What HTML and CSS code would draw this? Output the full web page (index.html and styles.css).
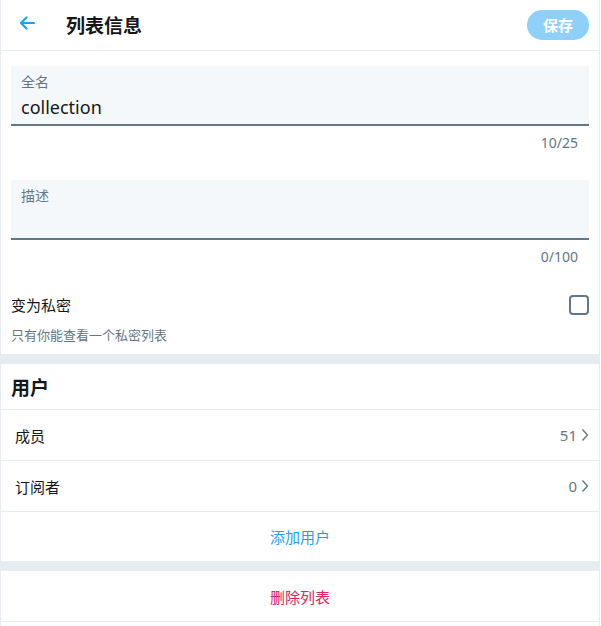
FILE: index.html
```html
<!DOCTYPE html>
<html lang="zh">
<head>
<meta charset="utf-8">
<title>列表信息</title>
<link rel="stylesheet" href="styles.css">
</head>
<body>
<div class="page">
  <header class="topbar">
    <div class="back">
      <svg width="18" height="16" viewBox="0 0 18 16"><path d="M16 8H3M8.5 2.5L3 8l5.5 5.5" fill="none" stroke="#1da1f2" stroke-width="2.2" stroke-linecap="round" stroke-linejoin="round"/></svg>
    </div>
    <h1 class="title">列表信息</h1>
    <button class="save">保存</button>
  </header>

  <section class="form">
    <div class="field">
      <div class="field-label">全名</div>
      <div class="field-value">collection</div>
    </div>
    <div class="counter">10/25</div>
    <div class="field">
      <div class="field-label">描述</div>
      <div class="field-value"></div>
    </div>
    <div class="counter">0/100</div>
    <div class="private-row">
      <span class="private-label">变为私密</span>
      <span class="checkbox"></span>
    </div>
    <div class="private-desc">只有你能查看一个私密列表</div>
  </section>

  <div class="separator"></div>

  <h2 class="section-title">用户</h2>
  <div class="row">
    <span class="row-label">成员</span>
    <span class="row-value">51<svg class="chev" width="8" height="14" viewBox="0 0 8 14"><path d="M1.5 1.5L6.5 7l-5 5.5" fill="none" stroke="#657786" stroke-width="1.4"/></svg></span>
  </div>
  <div class="row">
    <span class="row-label">订阅者</span>
    <span class="row-value">0<svg class="chev" width="8" height="14" viewBox="0 0 8 14"><path d="M1.5 1.5L6.5 7l-5 5.5" fill="none" stroke="#657786" stroke-width="1.4"/></svg></span>
  </div>
  <div class="action add">添加用户</div>
  <div class="separator"></div>
  <div class="action delete">删除列表</div>
</div>
</body>
</html>
```

FILE: styles.css
```css
* { box-sizing: border-box; }
html, body {
  margin: 0;
  padding: 0;
  background: #ffffff;
}
body {
  font-family: "Noto Sans", "Noto Sans CJK SC", sans-serif;
  color: #14171a;
}
.page {
  width: 600px;
  min-height: 626px;
  border-left: 1px solid #e6ecf0;
  border-right: 1px solid #e6ecf0;
}
.topbar {
  height: 51px;
  border-bottom: 1px solid #e6ecf0;
  display: flex;
  align-items: center;
  padding: 0 10px 0 17px;
}
.back {
  width: 18px;
  height: 16px;
  display: flex;
  margin-top: -4px;
}
.title {
  margin: 0 0 0 30px;
  font-size: 19px;
  font-weight: 700;
  font-family: "Noto Sans CJK SC", sans-serif;
  line-height: 24px;
  flex: 1;
}
.save {
  width: 62px;
  height: 30px;
  border: none;
  border-radius: 15px;
  background: #8ed0f9;
  color: #ffffff;
  font-family: "Noto Sans CJK SC", sans-serif;
  font-weight: 700;
  font-size: 15px;
  padding: 0;
  margin-top: -1px;
}
.form {
  padding: 15px 10px 10px 10px;
}
.field {
  height: 60px;
  background: #f5f8fa;
  border-bottom: 2px solid #657786;
  padding: 5px 10px 0 10px;
  border-radius: 2px 2px 0 0;
}
.field-label {
  font-family: "Noto Sans CJK SC", sans-serif;
  font-size: 14px;
  line-height: 20px;
  color: #657786;
}
.field-value {
  font-family: "Noto Sans", "Noto Sans CJK SC", sans-serif;
  font-size: 18px;
  line-height: 26px;
  margin-top: 3px;
  color: #14171a;
}
.counter {
  height: 54px;
  padding: 7px 11px 0 0;
  text-align: right;
  font-size: 14px;
  line-height: 20px;
  color: #657786;
}
.private-row {
  height: 22px;
  display: flex;
  align-items: center;
  justify-content: space-between;
}
.private-label {
  font-family: "Noto Sans CJK SC", sans-serif;
  font-size: 15px;
  line-height: 22px;
}
.checkbox {
  width: 20px;
  height: 20px;
  border: 2px solid #657786;
  border-radius: 4px;
}
.private-desc {
  margin-top: 10px;
  font-family: "Noto Sans CJK SC", sans-serif;
  font-size: 13px;
  line-height: 18px;
  color: #657786;
}
.separator {
  height: 10px;
  background: #e6ecf0;
}
.section-title {
  margin: 0;
  height: 46px;
  border-bottom: 1px solid #e6ecf0;
  padding: 11px 10px 0 10px;
  font-family: "Noto Sans CJK SC", sans-serif;
  font-size: 19px;
  font-weight: 700;
  line-height: 24px;
}
.row {
  height: 51px;
  border-bottom: 1px solid #e6ecf0;
  display: flex;
  align-items: center;
  justify-content: space-between;
  padding: 0 10px 0 14px;
  font-family: "Noto Sans CJK SC", sans-serif;
  font-size: 15px;
}
.row-value {
  display: flex;
  align-items: center;
  gap: 4px;
  color: #657786;
  font-family: "Noto Sans", sans-serif;
  font-size: 15px;
}
.chev { display: block; }
.action {
  height: 50px;
  display: flex;
  align-items: center;
  justify-content: center;
  font-family: "Noto Sans CJK SC", sans-serif;
  font-size: 15px;
}
.add { color: #1da1f2; height: 49px; }
.delete {
  color: #e0245e;
  border-bottom: 1px solid #e6ecf0;
  height: 51px;
}
```
